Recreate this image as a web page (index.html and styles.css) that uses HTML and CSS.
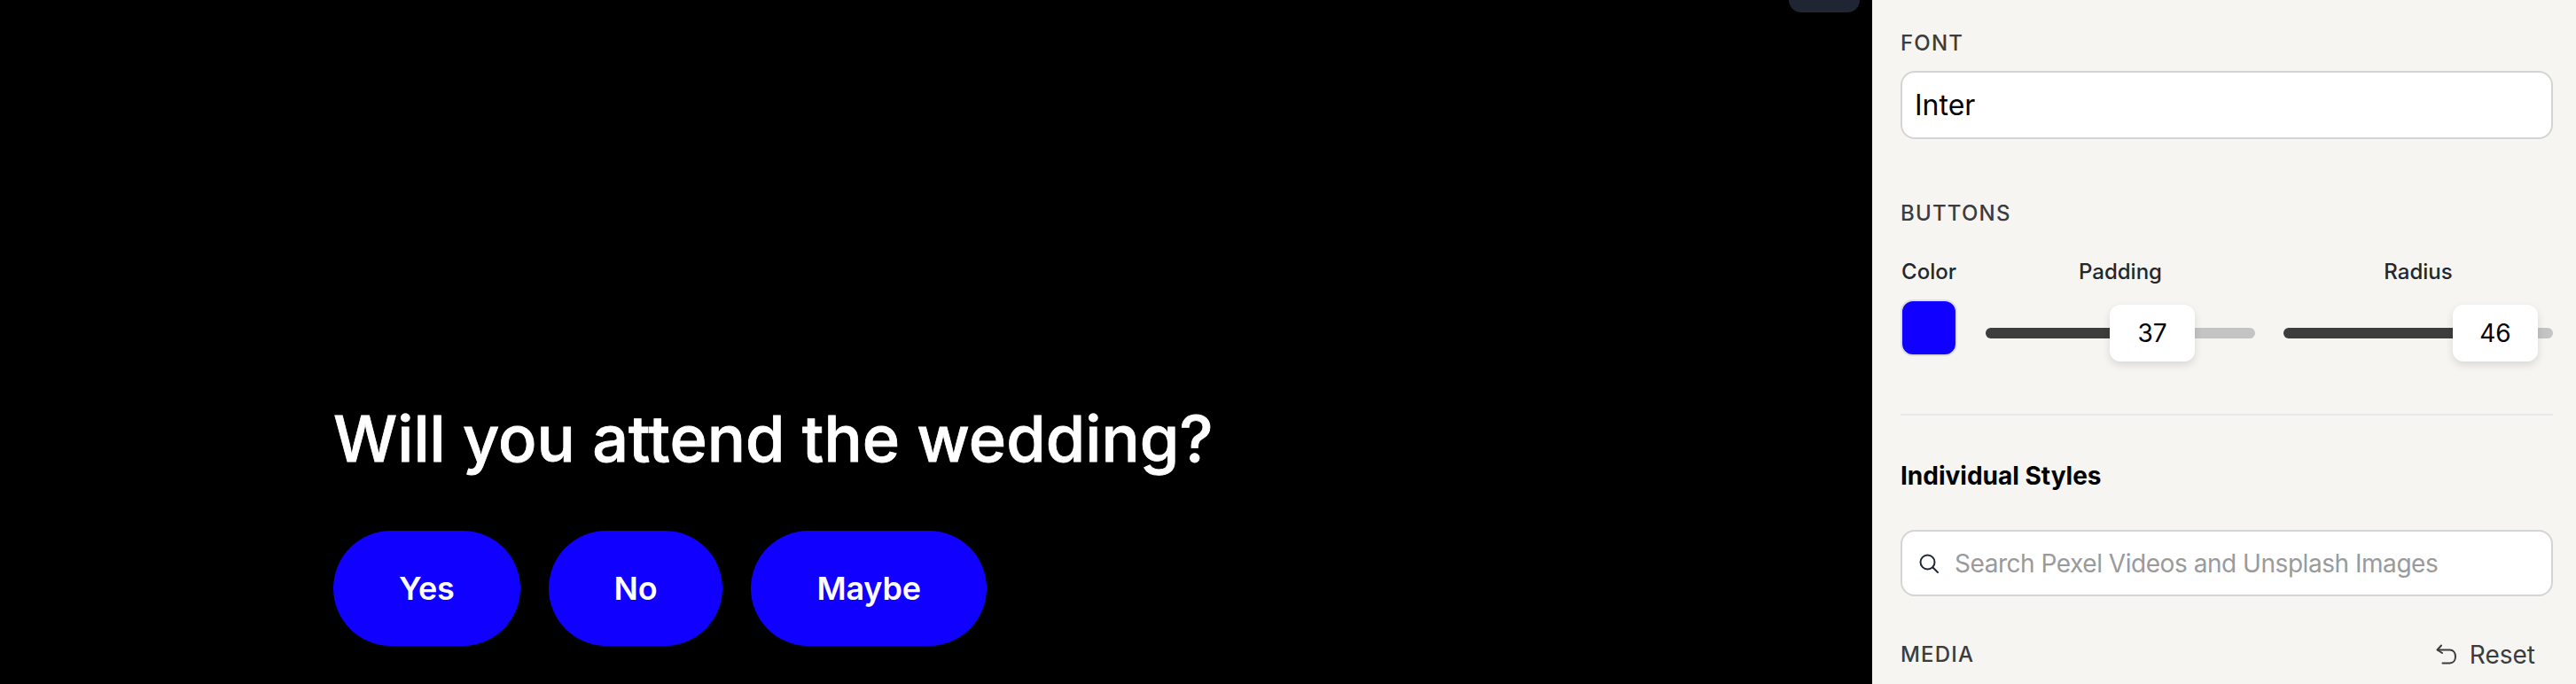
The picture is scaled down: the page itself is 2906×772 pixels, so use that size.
FILE: index.html
```html
<!DOCTYPE html>
<html lang="en">
<head>
<meta charset="utf-8">
<title>Form editor</title>
<link rel="stylesheet" href="styles.css">
</head>
<body>
<div class="app">
  <main class="stage">
    <div class="chip"></div>
    <h1 class="question">Will you attend the wedding?</h1>
    <div class="answers">
      <button class="answer">Yes</button>
      <button class="answer">No</button>
      <button class="answer">Maybe</button>
    </div>
  </main>
  <aside class="panel">
    <div class="label label-font">FONT</div>
    <div class="field field-font">Inter</div>
    <div class="label label-buttons">BUTTONS</div>
    <div class="controls">
      <div class="control control-color">
        <div class="control-name">Color</div>
        <div class="swatch"></div>
      </div>
      <div class="control control-padding">
        <div class="control-name">Padding</div>
        <div class="slider">
          <div class="track"><div class="fill fill-padding"></div></div>
          <div class="thumb thumb-padding">37</div>
        </div>
      </div>
      <div class="control control-radius">
        <div class="control-name">Radius</div>
        <div class="slider">
          <div class="track"><div class="fill fill-radius"></div></div>
          <div class="thumb thumb-radius">46</div>
        </div>
      </div>
    </div>
    <hr class="divider">
    <div class="section-title">Individual Styles</div>
    <div class="field field-search">
      <svg class="search-icon" viewBox="0 0 24 24" width="24" height="24" fill="none" stroke="#1f2733" stroke-width="2" stroke-linecap="round"><circle cx="10.5" cy="10.5" r="8"/><path d="M16.5 16.5L22 22"/></svg>
      <span class="placeholder">Search Pexel Videos and Unsplash Images</span>
    </div>
    <div class="media-row">
      <div class="label">MEDIA</div>
      <div class="reset">
        <svg class="reset-icon" viewBox="0 0 24 24" width="24" height="24" fill="none" stroke="#3c3c3c" stroke-width="2" stroke-linecap="round" stroke-linejoin="round"><path d="M6 1.5L1.5 6.5L7 10"/><path d="M2 6.5H15.5C19.5 6.5 22 9.5 22 14C22 18.5 19.5 21.5 15.5 21.5H7.5"/></svg>
        <span>Reset</span>
      </div>
    </div>
  </aside>
</div>
</body>
</html>
```
FILE: styles.css
```css
* { box-sizing: border-box; }
html, body { margin: 0; height: 100%; overflow: hidden; }
body { font-family: Inter, "Liberation Sans", sans-serif; background: #000; }
.app { display: flex; width: 2906px; height: 772px; }
.stage { position: relative; width: 2112px; flex: none; background: #000; display: flex; flex-direction: column; justify-content: flex-end; padding: 0 0 43px 376px; }
.chip { position: absolute; left: 2018px; top: -20px; width: 80px; height: 34px; border-radius: 14px; background: #1f2533; }
.question { margin: 0 0 60px; font-size: 72px; line-height: 88px; font-weight: 500; letter-spacing: 0.03px; -webkit-text-stroke: 0.8px #fff; color: #fff; }
.answers { display: flex; gap: 32px; }
.answer { height: 130px; padding: 0 74px; border: 0; border-radius: 92px; background: #1000ff; color: #fff; font: 600 36px/44px Inter, sans-serif; letter-spacing: -0.2px; }
.panel { width: 794px; flex: none; background: #f6f5f1; padding: 0 26px 0 32px; color: #000; }
.label { font-size: 24px; line-height: 32px; font-weight: 500; letter-spacing: 1.2px; color: #3c3c3c; }
.label-font { margin-top: 33px; }
.label-buttons { margin-top: 68px; }
.field { background: #fff; border: 2px solid #d4d4d4; border-radius: 16px; }
.field-font { margin-top: 15px; height: 77px; padding: 0 14px; font-size: 32px; line-height: 73px; }
.controls { display: flex; margin-top: 34px; }
.control-name { font-size: 24px; line-height: 32px; font-weight: 500; color: #24272e; text-align: center; }
.control-color { width: 64px; margin-right: 32px; }
.swatch { width: 64px; height: 64px; margin-top: 15px; background: #1000ff; border: 2px solid #dcdcdc; border-radius: 14px; }
.control-padding { width: 304px; margin-right: 32px; }
.control-radius { width: 304px; }
.slider { position: relative; height: 64px; margin-top: 21px; display: flex; align-items: center; }
.track { width: 100%; height: 12px; border-radius: 6px; background: #c4c4c4; overflow: hidden; }
.fill { height: 100%; background: #3d3d3d; }
.fill-padding { width: 60%; }
.fill-radius { width: 80%; }
.thumb { position: absolute; top: 0; width: 96px; height: 64px; border-radius: 12px; background: #fff; box-shadow: 0 4px 10px rgba(0,0,0,.12); font-size: 28px; line-height: 64px; text-align: center; }
.thumb-padding { left: 140px; }
.thumb-radius { left: 191px; }
.divider { margin: 59px 0 0; border: 0; height: 2px; background: #e8e8e8; }
.section-title { margin-top: 50px; font-size: 28px; line-height: 36px; font-weight: 650; }
.field-search { margin-top: 43px; height: 75px; display: flex; align-items: center; padding: 0 18px; }
.search-icon { flex: none; margin-right: 17px; }
.placeholder { font-size: 28px; letter-spacing: -0.46px; color: #9a9a9a; }
.media-row { margin-top: 49px; display: flex; justify-content: space-between; align-items: center; padding-right: 20px; }
.reset { display: flex; align-items: center; gap: 14px; font-size: 28px; color: #3c3c3c; }
```
